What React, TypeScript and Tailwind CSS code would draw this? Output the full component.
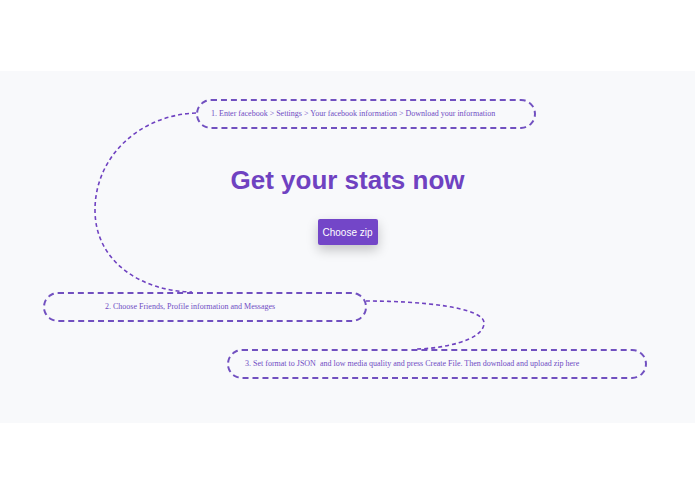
import React from "react";

const PURPLE = "#6f42c1";

function Step({ text, className }: { text: string; className: string }) {
  return (
    <div
      className={`h-[30px] flex items-center rounded-full border-2 border-dashed border-[#7150c0] text-[8px] text-[#6f4cc4] whitespace-pre ${className}`}
      style={{ fontFamily: '"Liberation Serif", "Times New Roman", serif' }}
    >
      {text}
    </div>
  );
}

export default function App() {
  return (
    <div className="w-[695px] h-[494px] bg-white" style={{ fontFamily: '"Liberation Sans", Arial, sans-serif' }}>
      <div className="h-[71px]" />
      <section className="relative h-[352px] bg-[#f8f9fb] pt-[28px]">
        <svg className="absolute inset-0 pointer-events-none" width="695" height="352" fill="none">
          <path
            d="M196 42 C140 44, 95 85, 95 139 C95 190, 140 220, 192 221"
            stroke={PURPLE}
            strokeWidth="1.6"
            strokeDasharray="4 3"
          />
          <path
            d="M366 230 C420 230, 484 236, 484 252 C484 270, 440 278, 415 278"
            stroke={PURPLE}
            strokeWidth="1.6"
            strokeDasharray="4 3"
          />
        </svg>
        <Step
          className="ml-[196px] w-[340px] pl-[13px]"
          text="1. Enter facebook > Settings > Your facebook information > Download your information"
        />
        <h1 className="mt-[34px] text-center text-[26px] leading-[34px] font-bold text-[#6f42c1]">
          Get your stats now
        </h1>
        <div className="mt-[22px] flex justify-center">
          <button className="h-[26px] w-[60px] rounded-[2px] bg-[#7346c8] text-white text-[10px] shadow-[0_5px_12px_rgba(0,0,0,0.22)]">
            Choose zip
          </button>
        </div>
        <Step className="mt-[47px] ml-[43px] w-[324px] pl-[60px]" text="2. Choose Friends, Profile information and Messages" />
        <Step
          className="mt-[27px] ml-[227px] w-[420px] pl-[16px]"
          text="3. Set format to JSON  and low media quality and press Create File. Then download and upload zip here"
        />
      </section>
    </div>
  );
}
